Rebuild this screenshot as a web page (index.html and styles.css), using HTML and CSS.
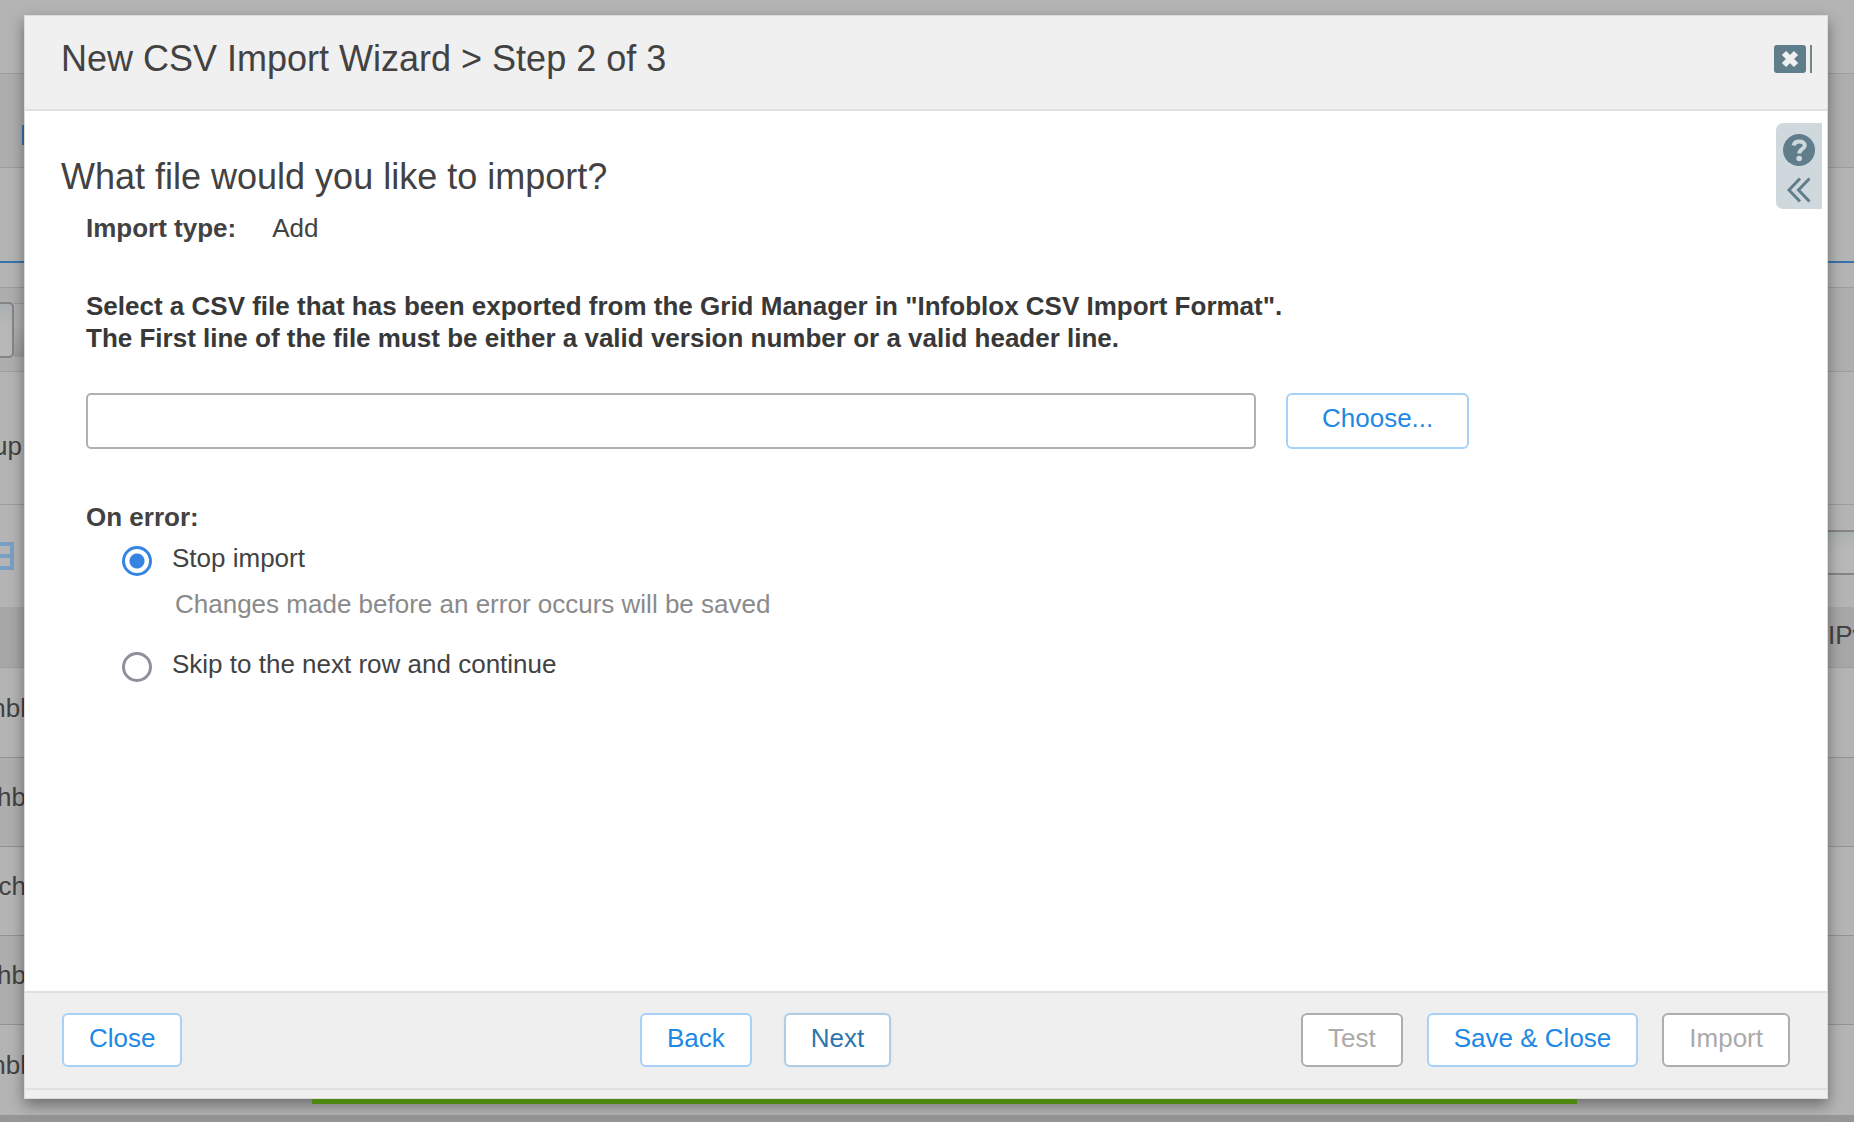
FILE: index.html
```
<!DOCTYPE html>
<html lang="en">
    <head>
        <meta charset="utf-8">
        <title>New CSV Import Wizard</title>
        <link rel="stylesheet" href="styles.css">
    </head>

    <body>
        <!-- Page under the dialog -->
        <div class="page">
            <div class="strip strip-top"></div>
            <div class="strip strip-tabs"><span class="tab"></span></div>
            <div class="strip strip-subtabs"></div>
            <div class="strip strip-gap"></div>
            <div class="strip strip-search"><span class="searchBox"></span><span class="searchButton"></span></div>
            <div class="strip strip-group"><span class="leftText">up</span></div>
            <div class="strip strip-tools">
                <svg class="gridIcon" viewBox="0 0 28 28"><path d="M-4 2H12V26H-4M-4 14H12" fill="none" stroke="#7b9fc4" stroke-width="4"/></svg>
                <span class="goTo"></span>
            </div>
            <div class="strip strip-head"><span class="rightText">IPv</span></div>
            <div class="strip row row-first"><span class="leftText">nbl</span></div>
            <div class="strip row row-alt"><span class="leftText">hb</span></div>
            <div class="strip row"><span class="leftText">ech</span></div>
            <div class="strip row row-alt"><span class="leftText">chb</span></div>
            <div class="strip row row-last"><span class="leftText">nbl</span></div>
            <div class="pageFooter"></div>
        </div>
        <div class="statusBar"></div>

        <div class="wizard" role="dialog" aria-labelledby="wizardTitle">
            <header class="wizardHeader">
                <h1 id="wizardTitle">New CSV Import Wizard &gt; Step 2 of 3</h1>
                <button type="button" class="closeIcon" aria-label="Close">
                    <svg width="32" height="28" viewBox="0 0 32 28">
                        <rect width="32" height="28" rx="3" fill="#607d8b"/>
                        <path d="M10 8L22 20M22 8L10 20" stroke="#f0f0f0" stroke-width="6"/>
                    </svg>
                </button>
            </header>

            <form class="wizardBody" onsubmit="return false;">
                <h2>What file would you like to import?</h2>
                <div class="fields">
                    <p class="importType"><b>Import type:</b><span>Add</span></p>
                    <label class="fileHint" for="csvFile">
                        Select a CSV file that has been exported from the Grid Manager in "Infoblox CSV Import Format".<br>
                        The First line of the file must be either a valid version number or a valid header line.
                    </label>
                    <div class="fileRow">
                        <input type="text" id="csvFile">
                        <button type="button" class="button choose">Choose...</button>
                    </div>
                    <fieldset class="onError">
                        <legend>On error:</legend>
                        <div class="option">
                            <input type="radio" name="onError" id="stopImport" checked>
                            <label for="stopImport">Stop import</label>
                        </div>
                        <p class="optionHint">Changes made before an error occurs will be saved</p>
                        <div class="option">
                            <input type="radio" name="onError" id="skipRow">
                            <label for="skipRow">Skip to the next row and continue</label>
                        </div>
                    </fieldset>
                </div>
            </form>

            <footer class="wizardFooter">
                <div class="footerLeft">
                    <button type="button" class="button">Close</button>
                </div>
                <div class="footerCenter">
                    <button type="button" class="button">Back</button>
                    <button type="button" class="button next">Next</button>
                </div>
                <div class="footerRight">
                    <button type="button" class="button" disabled>Test</button>
                    <button type="button" class="button">Save &amp; Close</button>
                    <button type="button" class="button" disabled>Import</button>
                </div>
            </footer>

            <div class="helpTab">
                <button type="button" aria-label="Help">
                    <svg width="32" height="32" viewBox="0 0 32 32">
                        <circle cx="16" cy="16" r="16" fill="#607d8b"/>
                        <path d="M10.500 11.500C11.500 8 13.500 7.500 16.300 7.500C19.500 7.500 21.800 9 21.800 11.500C21.800 15 16.300 14.800 16.300 19.500" fill="none" stroke="#cfd8dd" stroke-width="4"/>
                        <circle cx="16.200" cy="24.500" r="2.800" fill="#cfd8dd"/>
                    </svg>
                </button>
                <button type="button" class="expandHelp" aria-label="Expand help panel">
                    <svg width="24" height="26" viewBox="0 0 24 26">
                        <path d="M13 1.500L2 13L13 24.500M22.500 1.500L11.500 13L22.500 24.500" fill="none" stroke="#607d8b" stroke-width="3"/>
                    </svg>
                </button>
            </div>
        </div>
    </body>
</html>
```

FILE: styles.css
```
* {
    box-sizing: border-box;
}

body {
    margin: 0;
    height: 100vh;
    overflow: hidden;
    background-color: #b4b4b4;
    color: #424242;
    font-family: "Liberation Sans", Helvetica, Arial, sans-serif;
    font-size: 26px;
    line-height: 32px;
}

h1,
h2,
p,
fieldset,
legend {
    margin: 0;
    padding: 0;
    border: 0;
}

h1,
h2 {
    font-size: 36px;
    line-height: 42px;
    font-weight: normal;
}

button {
    font: inherit;
    cursor: pointer;
}

svg {
    display: block;
}

/* Page under the dialog */

.page {
    display: flex;
    flex-direction: column;
    height: 100vh;
}

.strip {
    display: flex;
    flex: none;
    align-items: center;
    justify-content: space-between;
    border-bottom: 1px solid #9d9d9d;
}

.strip-top {
    height: 74px;
}

.strip-tabs {
    height: 94px;
    background-color: #aeaeae;
}

.tab {
    width: 8px;
    height: 20px;
    margin: 28px 0 0 22px;
    background-color: #3873ad;
}

.strip-subtabs {
    height: 95px;
    border-bottom: 2px solid #3873ad;
}

.strip-gap {
    height: 25px;
}

.strip-search {
    height: 84px;
    background-color: #aeaeae;
    justify-content: flex-start;
}

.searchBox {
    width: 14px;
    height: 56px;
    border: 2px solid #858585;
    border-left: 0;
    border-radius: 0 5px 5px 0;
    background: linear-gradient(#aab0b0, #b8b8b8 40%);
}

.searchButton {
    width: 40px;
    height: 54px;
    background: linear-gradient(#b0b0b0 40%, #9c9c9c);
    border-top: 1px solid #999;
}

.strip-group {
    height: 133px;
}

.leftText {
    display: flex;
    justify-content: flex-end;
    width: 26px;
}

.strip-group .leftText {
    width: 22px;
    margin-top: 16px;
}

.strip-tools {
    height: 102px;
    border-bottom: 0;
}

.gridIcon {
    width: 28px;
    height: 28px;
}

.goTo {
    width: 28px;
    height: 45px;
    margin-bottom: 8px;
    border: 2px solid #858585;
    border-width: 2px 0;
    background: linear-gradient(#aab0b0, #b8b8b8 40%);
}

.strip-head {
    height: 61px;
    padding-bottom: 4px;
    background-color: #a7a7a7;
    justify-content: flex-end;
    overflow: hidden;
}

.rightText {
    width: 26px;
}

.row {
    height: 89px;
    border-color: #929292;
}

.row-alt {
    background-color: #aeaeae;
}

.row-first {
    height: 90px;
}

.row-last {
    height: 90px;
    border: 0;
}

.row .leftText {
    margin-bottom: 10px;
}

.pageFooter {
    flex: 1;
    background-color: #969696;
}

.statusBar {
    position: absolute;
    z-index: 1;
    bottom: 18px;
    left: 312px;
    right: 277px;
    height: 5px;
    background-color: #4c870f;
}

/* Dialog */

.wizard {
    position: fixed;
    top: 15px;
    right: 26px;
    bottom: 23px;
    left: 24px;
    display: flex;
    flex-direction: column;
    padding-bottom: 8px;
    background-color: #efefef;
    border: 1px solid #dcdcdc;
    box-shadow: 0 6px 14px rgba(0, 0, 0, 0.4);
}

.wizardHeader {
    display: flex;
    align-items: center;
    justify-content: space-between;
    height: 95px;
    padding: 0 15px 8px 36px;
    background-color: #f0f0f0;
    border-bottom: 2px solid #e0e0e0;
}

.closeIcon {
    padding: 0 4px 0 0;
    border: 0;
    border-right: 2px solid #78838a;
    background: none;
}

.wizardBody {
    flex: 1;
    padding: 45px 36px 0;
    background-color: #fff;
}

.fields {
    padding: 14px 0 0 25px;
}

.importType {
    display: flex;
    gap: 36px;
    margin-bottom: 46px;
}

.fileHint {
    display: block;
    margin-bottom: 39px;
    font-weight: bold;
    color: #383838;
}

.fileRow {
    display: flex;
    gap: 30px;
    margin-bottom: 52px;
}

.fileRow input {
    flex: 0 1 1170px;
    min-width: 0;
    height: 56px;
    padding: 0 12px;
    border: 2px solid #b0b0b0;
    border-radius: 5px;
    font: inherit;
    color: inherit;
}

.button {
    height: 54px;
    padding: 0 25px 4px;
    border: 2px solid #a8d1f8;
    border-radius: 6px;
    background-color: #fff;
    color: #1e88e5;
    white-space: nowrap;
}

.button:disabled {
    border-color: #aeaeae;
    color: #aaa;
    cursor: default;
}

.choose {
    height: 56px;
    padding: 0 34px 6px;
}

.next {
    border-color: #b3cde2;
    color: #2c76ae;
    box-shadow: 0 0 3px #cfe6fa;
}

.onError legend {
    margin-bottom: 9px;
    font-weight: bold;
}

.option {
    display: flex;
    align-items: flex-start;
    gap: 20px;
    padding-left: 36px;
}

.option input {
    appearance: none;
    width: 30px;
    height: 30px;
    margin: 4px 0 0;
    border: 3px solid #8f8f9d;
    border-radius: 50%;
    background-color: #fff;
}

.option input:checked {
    border-color: #3584e4;
    background: radial-gradient(circle, #3584e4 7px, #fff 8px);
}

.optionHint {
    padding: 12px 0 28px 89px;
    color: #8a8a8a;
}

.wizardFooter {
    display: grid;
    grid-template-columns: 578px 1fr auto;
    align-items: center;
    height: 99px;
    padding: 0 37px 2px;
    background-color: #efefef;
    border: 2px solid #e0e0e0;
    border-width: 2px 0;
}

.footerCenter {
    display: flex;
    gap: 32px;
}

.footerRight {
    display: flex;
    gap: 24px;
}

.helpTab {
    position: absolute;
    top: 107px;
    right: 5px;
    display: flex;
    flex-direction: column;
    align-items: center;
    gap: 11px;
    width: 46px;
    height: 86px;
    padding-top: 11px;
    border-radius: 7px 0 0 7px;
    background-color: #cfd8dd;
}

.helpTab button {
    padding: 0;
    border: 0;
    background: none;
}
```
